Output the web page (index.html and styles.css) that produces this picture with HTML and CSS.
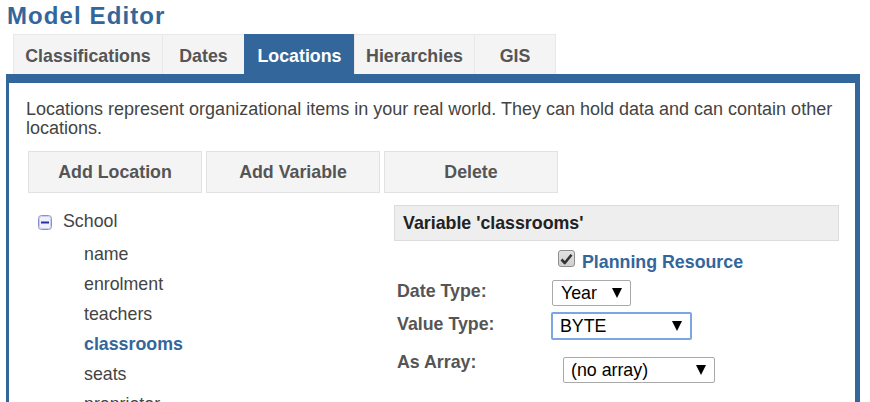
FILE: index.html
```html
<!DOCTYPE html>
<html>
<head>
<meta charset="utf-8">
<link rel="stylesheet" href="styles.css">
</head>
<body>
<h1 class="title">Model Editor</h1>
<div class="tabs">
  <div class="tab tab-classif">Classifications</div>
  <div class="tab tab-dates">Dates</div>
  <div class="tab tab-loc active">Locations</div>
  <div class="tab tab-hier">Hierarchies</div>
  <div class="tab tab-gis">GIS</div>
</div>
<div class="panel">
  <p class="desc">Locations represent organizational items in your real world. They can hold data and can contain other locations.</p>
  <div class="buttons">
    <div class="btn">Add Location</div>
    <div class="btn">Add Variable</div>
    <div class="btn">Delete</div>
  </div>
  <div class="content">
    <div class="tree">
      <div class="node">
        <svg class="toggle" width="14" height="15" viewBox="0 0 14 15">
          <rect x="0.5" y="0.5" width="13" height="14" rx="3" ry="3" fill="#eef0fb" stroke="#8a8fd6"/>
          <rect x="1.5" y="1.5" width="11" height="12" rx="2" ry="2" fill="none" stroke="#c9ccf0"/>
          <rect x="3" y="6.5" width="8" height="2" fill="#2a2f9e"/>
        </svg>
        <span>School</span>
      </div>
      <ul class="children">
        <li>name</li>
        <li>enrolment</li>
        <li>teachers</li>
        <li class="selected">classrooms</li>
        <li>seats</li>
        <li>proprietor</li>
      </ul>
    </div>
    <div class="details">
      <div class="var-head">Variable 'classrooms'</div>
      <div class="check-row">
        <span class="checkbox">
          <svg width="13" height="12" viewBox="0 0 13 12"><path d="M1.5 6.5 L4.8 10 L11.5 1.8" fill="none" stroke="#333" stroke-width="2.6" stroke-linejoin="round"/></svg>
        </span>
        <span class="check-label">Planning Resource</span>
      </div>
      <div class="field field-date">
        <span class="label">Date Type:</span>
        <div class="select sel-year"><span>Year</span><span class="arrow"></span></div>
      </div>
      <div class="field field-value">
        <span class="label">Value Type:</span>
        <div class="select sel-value focus"><span>BYTE</span><span class="arrow"></span></div>
      </div>
      <div class="field field-array">
        <span class="label">As Array:</span>
        <div class="select sel-array"><span>(no array)</span><span class="arrow"></span></div>
      </div>
    </div>
  </div>
</div>
</body>
</html>
```
FILE: styles.css
```css
* { box-sizing: border-box; }
html, body { margin: 0; padding: 0; background: #fff; }
body {
  font-family: "Liberation Sans", Arial, sans-serif;
  font-size: 17.8px;
  color: #333;
  overflow: hidden;
}
.title {
  margin: 2px 0 0 7px;
  font-size: 24px;
  line-height: 28px;
  letter-spacing: 1.1px;
  font-weight: bold;
  color: #33669a;
}
.tabs {
  display: flex;
  margin: 4px 0 0 13px;
  height: 40px;
}
.tab {
  height: 40px;
  line-height: 40px;
  padding-top: 1px;
  text-align: center;
  font-weight: bold;
  color: #555;
  background: #f4f4f4;
  border-top: 1px solid #e8e8e8;
  border-left: 1px solid #e8e8e8;
}
.tab-gis { border-right: 1px solid #e8e8e8; }
.tab-classif { width: 149px; }
.tab-dates { width: 82px; }
.tab-loc { width: 110px; }
.tab-hier { width: 120px; }
.tab-gis { width: 82px; }
.tab.active {
  background: #33669a;
  color: #fff;
  border-color: #33669a;
}
.panel {
  margin-left: 6px;
  width: 854px;
  height: 340px;
  border-top: 9px solid #33669a;
  border-left: 3px solid #33669a;
  border-right: 5px solid #33669a;
  padding: 17px 16px 0 17px;
}
.desc {
  margin: 0;
  font-size: 18px;
  line-height: 18.5px;
  color: #444;
}
.buttons {
  display: flex;
  gap: 4px;
  margin: 14px 0 0 2px;
}
.btn {
  width: 174px;
  height: 42px;
  line-height: 40px;
  text-align: center;
  font-weight: bold;
  color: #555;
  background: #f4f4f4;
  border: 1px solid #e2e2e2;
}
.content {
  display: grid;
  grid-template-columns: 368px 445px;
  margin-top: 12px;
}
.tree {
  padding: 1px 0 0 12px;
  color: #444;
}
.node {
  display: flex;
  align-items: center;
  height: 30px;
  margin-bottom: 3px;
}
.toggle { margin: 2px 11px 0 0; }
.children {
  list-style: none;
  margin: 0;
  padding: 0 0 0 46px;
}
.children li {
  line-height: 30px;
}
.children .selected {
  color: #33669a;
  font-weight: bold;
}
.var-head {
  height: 36px;
  line-height: 34px;
  padding-left: 8px;
  background: #eeeeee;
  border: 1px solid #dcdcdc;
  font-weight: bold;
  color: #222;
}
.check-row {
  display: flex;
  align-items: flex-start;
  margin: 9px 0 0 164px;
  height: 23px;
}
.checkbox {
  width: 17px;
  height: 17px;
  border: 1px solid #8e8e8e;
  border-radius: 3px;
  background: linear-gradient(#e2e2e2, #cfcfcf);
  display: flex;
  align-items: center;
  justify-content: center;
}
.check-label {
  margin-left: 7px;
  padding-top: 2px;
  line-height: 20px;
  font-weight: bold;
  color: #33669a;
}
.field {
  display: flex;
  align-items: flex-start;
}
.label {
  width: 154px;
  padding-left: 3px;
  line-height: 20px;
  font-weight: bold;
  color: #555;
}
.field-date { margin-top: 7px; }
.field-date .label { margin-top: 1px; width: 158px; }
.field-value { margin-top: 6px; }
.field-value .label { margin-top: 2px; width: 157px; }
.field-array { margin-top: 12px; }
.field-array .select { margin: 5px 0 0 15px; }
.select {
  display: flex;
  align-items: center;
  justify-content: space-between;
  height: 26px;
  padding: 1px 8px 0 8px;
  border: 1px solid #a9a9a9;
  border-radius: 2px;
  color: #000;
  background: #fff;
}
.sel-year { width: 79px; }
.sel-value { width: 141px; height: 28px; }
.sel-array { width: 152px; padding-left: 7px; }
.select.focus {
  border: 2px solid #7ba6e4;
  padding-left: 7px;
}
.arrow {
  width: 0;
  height: 0;
  border-left: 5px solid transparent;
  border-right: 5px solid transparent;
  border-top: 10px solid #000;
  margin-top: -1px;
}
```
